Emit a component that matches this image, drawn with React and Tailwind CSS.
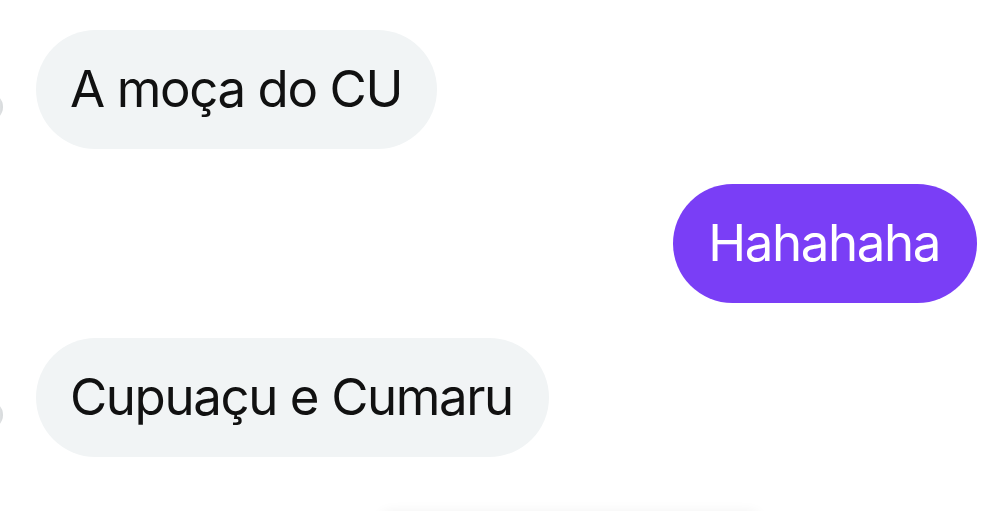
export default function App() {
  const font = { fontFamily: 'Inter, "Noto Sans", sans-serif' };
  return (
    <div className="relative w-[1000px] h-[511px] overflow-hidden bg-white" style={font}>
      <div className="flex flex-col pt-[30px] pl-[36px] pr-[23px] gap-[35px]">
        <div className="relative flex">
          <div className="absolute left-[-66px] top-[63px] w-[33px] h-[28px] rounded-full bg-gradient-to-r from-white via-white to-[#d6d9db] blur-[0.6px]" />
          <div className="h-[119px] pl-[34px] pr-[35px] flex items-center rounded-full bg-[#f1f4f5] text-[#111111] text-[51px] tracking-[-1.4px]">
            A moça do CU
          </div>
        </div>
        <div className="flex justify-end">
          <div className="h-[119px] pl-[35px] pr-[37px] flex items-center rounded-full bg-[#7a3ef6] text-white text-[51px] tracking-[-1.4px]">
            Hahahaha
          </div>
        </div>
        <div className="relative flex">
          <div className="absolute left-[-66px] top-[63px] w-[33px] h-[28px] rounded-full bg-gradient-to-r from-white via-white to-[#d6d9db] blur-[0.6px]" />
          <div className="h-[119px] pl-[34px] pr-[36px] flex items-center rounded-full bg-[#f1f4f5] text-[#111111] text-[51px] tracking-[-1.4px]">
            Cupuaçu e Cumaru
          </div>
        </div>
      </div>
      <div className="absolute left-[380px] top-[515px] w-[380px] h-[20px] rounded-full shadow-[0_-2px_14px_rgba(0,0,0,0.07)] bg-white" />
    </div>
  );
}
